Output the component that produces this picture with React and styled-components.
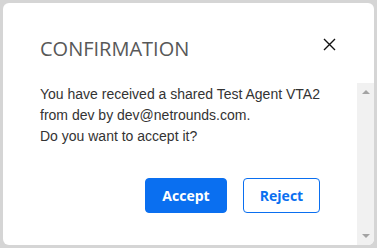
import React from "react";
import styled, { createGlobalStyle } from "styled-components";

const Global = createGlobalStyle`
  html, body { margin: 0; padding: 0; }
  body { background: #d5d5d5; }
  * { box-sizing: border-box; }
`;

const Frame = styled.div`
  width: 377px;
  height: 248px;
  padding: 3px;
  background: #d5d5d5;
`;

const Dialog = styled.div`
  width: 371px;
  height: 242px;
  background: #ffffff;
  border-radius: 6px;
  overflow: hidden;
  display: flex;
  flex-direction: column;
`;

const Header = styled.div`
  height: 80px;
  flex: none;
  display: flex;
  justify-content: space-between;
  align-items: flex-start;
  padding: 34px 38px 0 37px;
`;

const Title = styled.h2`
  margin: 0;
  font-family: "Open Sans", sans-serif;
  font-weight: 400;
  font-size: 20px;
  line-height: 24px;
  color: #585858;
`;

const Close = styled.button`
  border: 0;
  background: none;
  padding: 0;
  margin-top: 1px;
  width: 13px;
  height: 13px;
  display: flex;
  cursor: pointer;
`;

const BodyRow = styled.div`
  flex: 1;
  display: flex;
  min-height: 0;
`;

const Content = styled.div`
  flex: 1;
  padding: 1px 37px 0 37px;
  display: flex;
  flex-direction: column;
`;

const Message = styled.p`
  margin: 0;
  font-family: "Liberation Sans", Arial, sans-serif;
  font-size: 14px;
  line-height: 21px;
  color: #333333;
`;

const Actions = styled.div`
  display: flex;
  justify-content: flex-end;
  gap: 16px;
  margin-top: 31px;
`;

const Button = styled.button`
  height: 35px;
  width: ${(p) => (p.$primary ? "82px" : "77px")};
  padding: 0;
  border-radius: 4px;
  border: 1px solid #0a6ff0;
  font-family: "Open Sans", sans-serif;
  font-weight: 700;
  font-size: 14px;
  cursor: pointer;
  background: ${(p) => (p.$primary ? "#0a6ff0" : "#ffffff")};
  color: ${(p) => (p.$primary ? "#ffffff" : "#0a6ff0")};
`;

const Scrollbar = styled.div`
  width: 17px;
  flex: none;
  background: #f1f1f1;
  display: flex;
  flex-direction: column;
  justify-content: space-between;
  align-items: center;
  padding: 7px 0 7px;
`;

const Arrow = styled.div`
  width: 0;
  height: 0;
  border-left: 4px solid transparent;
  border-right: 4px solid transparent;
  ${(p) =>
    p.$down
      ? "border-top: 4px solid #a3a3a3;"
      : "border-bottom: 4px solid #a3a3a3;"}
`;

export default function App() {
  return (
    <>
      <Global />
      <Frame>
        <Dialog>
          <Header>
            <Title>CONFIRMATION</Title>
            <Close aria-label="Close">
              <svg width="13" height="13" viewBox="0 0 13 13">
                <path d="M1 1 L12 12 M12 1 L1 12" stroke="#111" strokeWidth="1.4" fill="none" />
              </svg>
            </Close>
          </Header>
          <BodyRow>
            <Content>
              <Message>
                You have received a shared Test Agent VTA2
                <br />
                from dev by dev@netrounds.com.
                <br />
                Do you want to accept it?
              </Message>
              <Actions>
                <Button $primary>Accept</Button>
                <Button>Reject</Button>
              </Actions>
            </Content>
            <Scrollbar>
              <Arrow />
              <Arrow $down />
            </Scrollbar>
          </BodyRow>
        </Dialog>
      </Frame>
    </>
  );
}
